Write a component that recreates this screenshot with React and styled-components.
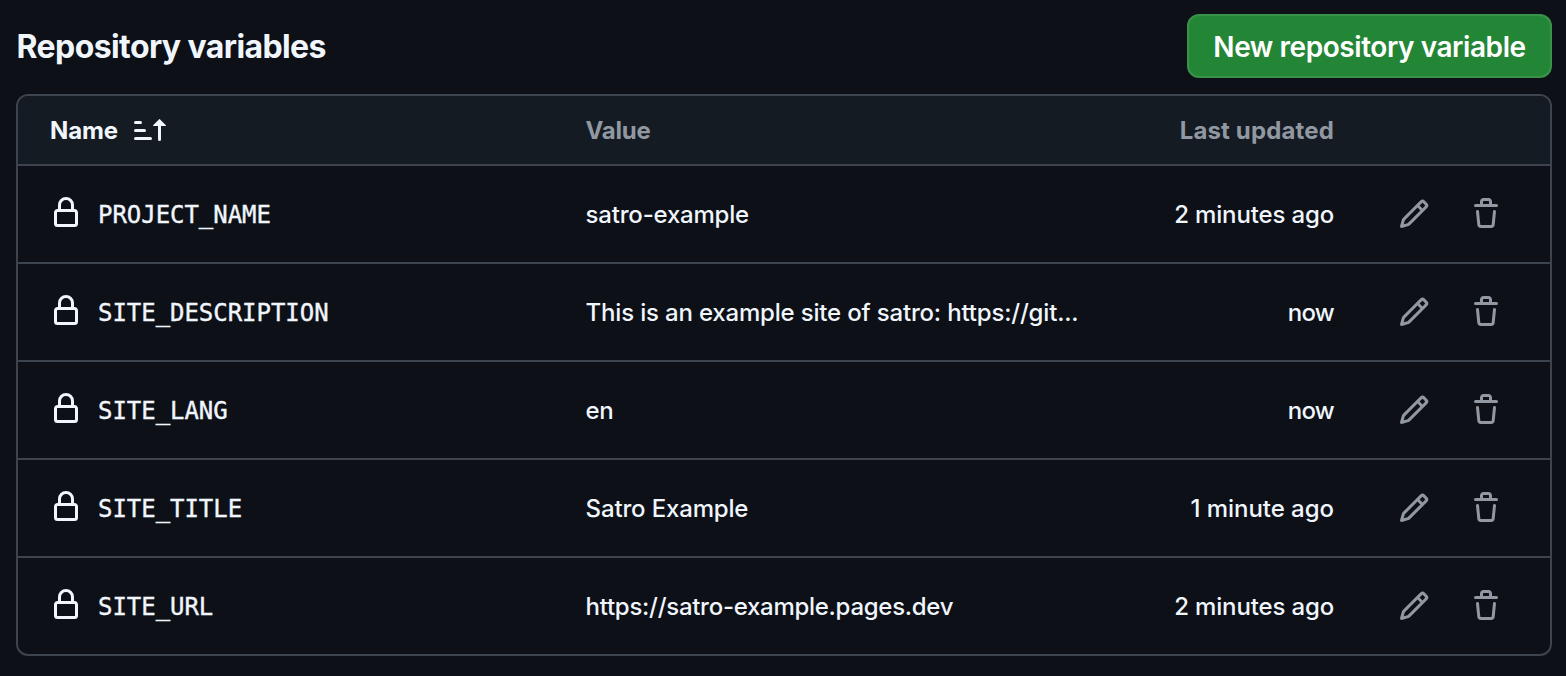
import React from "react";
import styled, { createGlobalStyle } from "styled-components";

const GlobalStyle = createGlobalStyle`
  * { box-sizing: border-box; }
  body {
    margin: 0;
    background: #0d1017;
    color: #f0f6fc;
    font-family: Inter, "Liberation Sans", sans-serif;
    font-size: 24px;
  }
`;

const Page = styled.main`
  height: 676px;
  padding: 14px 14px 0 16px;
  overflow: hidden;
`;

const Toolbar = styled.header`
  display: flex;
  justify-content: space-between;
  align-items: center;
  height: 64px;
  margin-bottom: 16px;
`;

const Title = styled.h2`
  margin: 0;
  padding: 2px 0 0 0.6px;
  font-size: 32px;
  line-height: 48px;
  font-weight: 650;
  letter-spacing: -0.6px;
  white-space: nowrap;
`;

const PrimaryButton = styled.button`
  display: flex;
  align-items: center;
  justify-content: center;
  width: 365px;
  height: 64px;
  padding: 2px 0 0;
  border: 2px solid #39924a;
  border-radius: 12px;
  background: #238636;
  color: #fff;
  font: 570 28px/40px Inter, sans-serif;
  letter-spacing: -0.44px;
  white-space: nowrap;
`;

const Table = styled.section`
  border: 2px solid #3d444d;
  border-radius: 12px;
  overflow: hidden;
`;

const Row = styled.div`
  display: grid;
  grid-template-columns: 535.6px 1fr 220px 216px;
  align-items: center;
  height: ${(p) => (p.$last ? 96 : 98)}px;
  padding-left: 32px;
  border-bottom: ${(p) => (p.$last ? 0 : 2)}px solid #3d444d;
`;

const HeadRow = styled(Row)`
  height: 70px;
  background: #151b23;
  color: #9198a1;
  font-weight: 680;
`;

const Cell = styled.div`
  display: flex;
  align-items: center;
  justify-content: ${(p) => (p.$end ? "flex-end" : "flex-start")};
  gap: ${(p) => p.$gap || 0}px;
  white-space: nowrap;
  line-height: 36px;
`;

const Label = styled.span`
  padding-top: 2px;
  letter-spacing: ${(p) => p.$track || 0}px;
`;

const SortLabel = styled(Label)`
  width: 68px;
  color: #f0f6fc;
`;

const Value = styled(Label)`
  font-weight: 450;
`;

const VariableName = styled.span`
  padding-top: 2px;
  font-family: "DejaVu Sans Mono", monospace;
  font-size: 24px;
  letter-spacing: -0.04px;
  -webkit-text-stroke: 0.35px currentColor;
`;

const Icon = styled.svg`
  display: block;
  width: 32px;
  height: 32px;
  flex: none;
  fill: ${(p) => (p.$muted ? "#9198a1" : "#f0f6fc")};
`;

const LockSlot = styled.span`
  padding-bottom: 2px;
`;

const Actions = styled.div`
  display: flex;
  gap: 40px;
  padding-left: 64px;
`;

const IconButton = styled.button`
  display: flex;
  padding: 0;
  border: 0;
  background: none;
`;

const icons = {
  lock: "M4 4a4 4 0 0 1 8 0v2h.25c.966 0 1.75.784 1.75 1.75v5.5A1.75 1.75 0 0 1 12.25 15h-8.5A1.75 1.75 0 0 1 2 13.25v-5.5C2 6.784 2.784 6 3.75 6H4Zm8.25 3.5h-8.5a.25.25 0 0 0-.25.25v5.5c0 .138.112.25.25.25h8.5a.25.25 0 0 0 .25-.25v-5.5a.25.25 0 0 0-.25-.25ZM10.5 6V4a2.5 2.5 0 1 0-5 0v2Z",
  pencil: "M11.013 1.427a1.75 1.75 0 0 1 2.474 0l1.086 1.086a1.75 1.75 0 0 1 0 2.474l-8.61 8.61c-.21.21-.47.364-.756.445l-3.251.93a.75.75 0 0 1-.927-.928l.929-3.25c.081-.286.235-.547.445-.758l8.61-8.61Zm.176 4.823L9.75 4.81l-6.286 6.287a.253.253 0 0 0-.064.108l-.558 1.953 1.953-.558a.253.253 0 0 0 .108-.064Zm1.238-3.763a.25.25 0 0 0-.354 0L10.811 3.75l1.439 1.44 1.263-1.263a.25.25 0 0 0 0-.354Z",
  trash: "M11 1.75V3h2.25a.75.75 0 0 1 0 1.5H2.75a.75.75 0 0 1 0-1.5H5V1.75C5 .784 5.784 0 6.75 0h2.5C10.216 0 11 .784 11 1.75ZM4.496 6.675l.66 6.6a.25.25 0 0 0 .249.225h5.19a.25.25 0 0 0 .249-.225l.66-6.6a.75.75 0 0 1 1.492.149l-.66 6.6A1.748 1.748 0 0 1 10.595 15h-5.19a1.75 1.75 0 0 1-1.741-1.575l-.66-6.6a.75.75 0 1 1 1.492-.15ZM6.5 1.75V3h3V1.75a.25.25 0 0 0-.25-.25h-2.5a.25.25 0 0 0-.25.25Z",
  sort: "m12.927 2.573 3 3A.25.25 0 0 1 15.75 6H13.5v6.75a.75.75 0 0 1-1.5 0V6H9.75a.25.25 0 0 1-.177-.427l3-3a.25.25 0 0 1 .354 0ZM0 12.25a.75.75 0 0 1 .75-.75h7.5a.75.75 0 0 1 0 1.5H.75a.75.75 0 0 1-.75-.75Zm0-4a.75.75 0 0 1 .75-.75h4.5a.75.75 0 0 1 0 1.5H.75a.75.75 0 0 1-.75-.75Zm0-4a.75.75 0 0 1 .75-.75h2.5a.75.75 0 0 1 0 1.5H.75a.75.75 0 0 1-.75-.75Z",
};

const Glyph = ({ name, muted }) => (
  <Icon viewBox="0 0 16 16" $muted={muted} aria-hidden="true">
    <path d={icons[name]} />
  </Icon>
);

const variables = [
  { name: "PROJECT_NAME", value: "satro-example", track: -0.2, updated: "2 minutes ago", updatedTrack: -0.15 },
  { name: "SITE_DESCRIPTION", value: "This is an example site of satro: https://git...", track: -0.18, updated: "now", updatedTrack: -0.7 },
  { name: "SITE_LANG", value: "en", track: -0.4, updated: "now", updatedTrack: -0.7 },
  { name: "SITE_TITLE", value: "Satro Example", track: -0.16, updated: "1 minute ago", updatedTrack: -0.04 },
  { name: "SITE_URL", value: "https://satro-example.pages.dev", track: -0.28, updated: "2 minutes ago", updatedTrack: -0.15 },
];

export default function App() {
  return (
    <Page>
      <GlobalStyle />
      <Toolbar>
        <Title>Repository variables</Title>
        <PrimaryButton>New repository variable</PrimaryButton>
      </Toolbar>
      <Table>
        <HeadRow>
          <Cell $gap={16}>
            <SortLabel $track={-0.1}>Name</SortLabel>
            <Glyph name="sort" />
          </Cell>
          <Cell><Label $track={-0.25}>Value</Label></Cell>
          <Cell $end><Label $track={0.15}>Last updated</Label></Cell>
        </HeadRow>
        {variables.map((v, i) => (
          <Row key={v.name} $last={i === variables.length - 1}>
            <Cell $gap={16}>
              <LockSlot><Glyph name="lock" /></LockSlot>
              <VariableName>{v.name}</VariableName>
            </Cell>
            <Cell><Value $track={v.track}>{v.value}</Value></Cell>
            <Cell $end><Value $track={v.updatedTrack}>{v.updated}</Value></Cell>
            <Actions>
              <IconButton aria-label="Edit"><Glyph name="pencil" muted /></IconButton>
              <IconButton aria-label="Delete"><Glyph name="trash" muted /></IconButton>
            </Actions>
          </Row>
        ))}
      </Table>
    </Page>
  );
}
